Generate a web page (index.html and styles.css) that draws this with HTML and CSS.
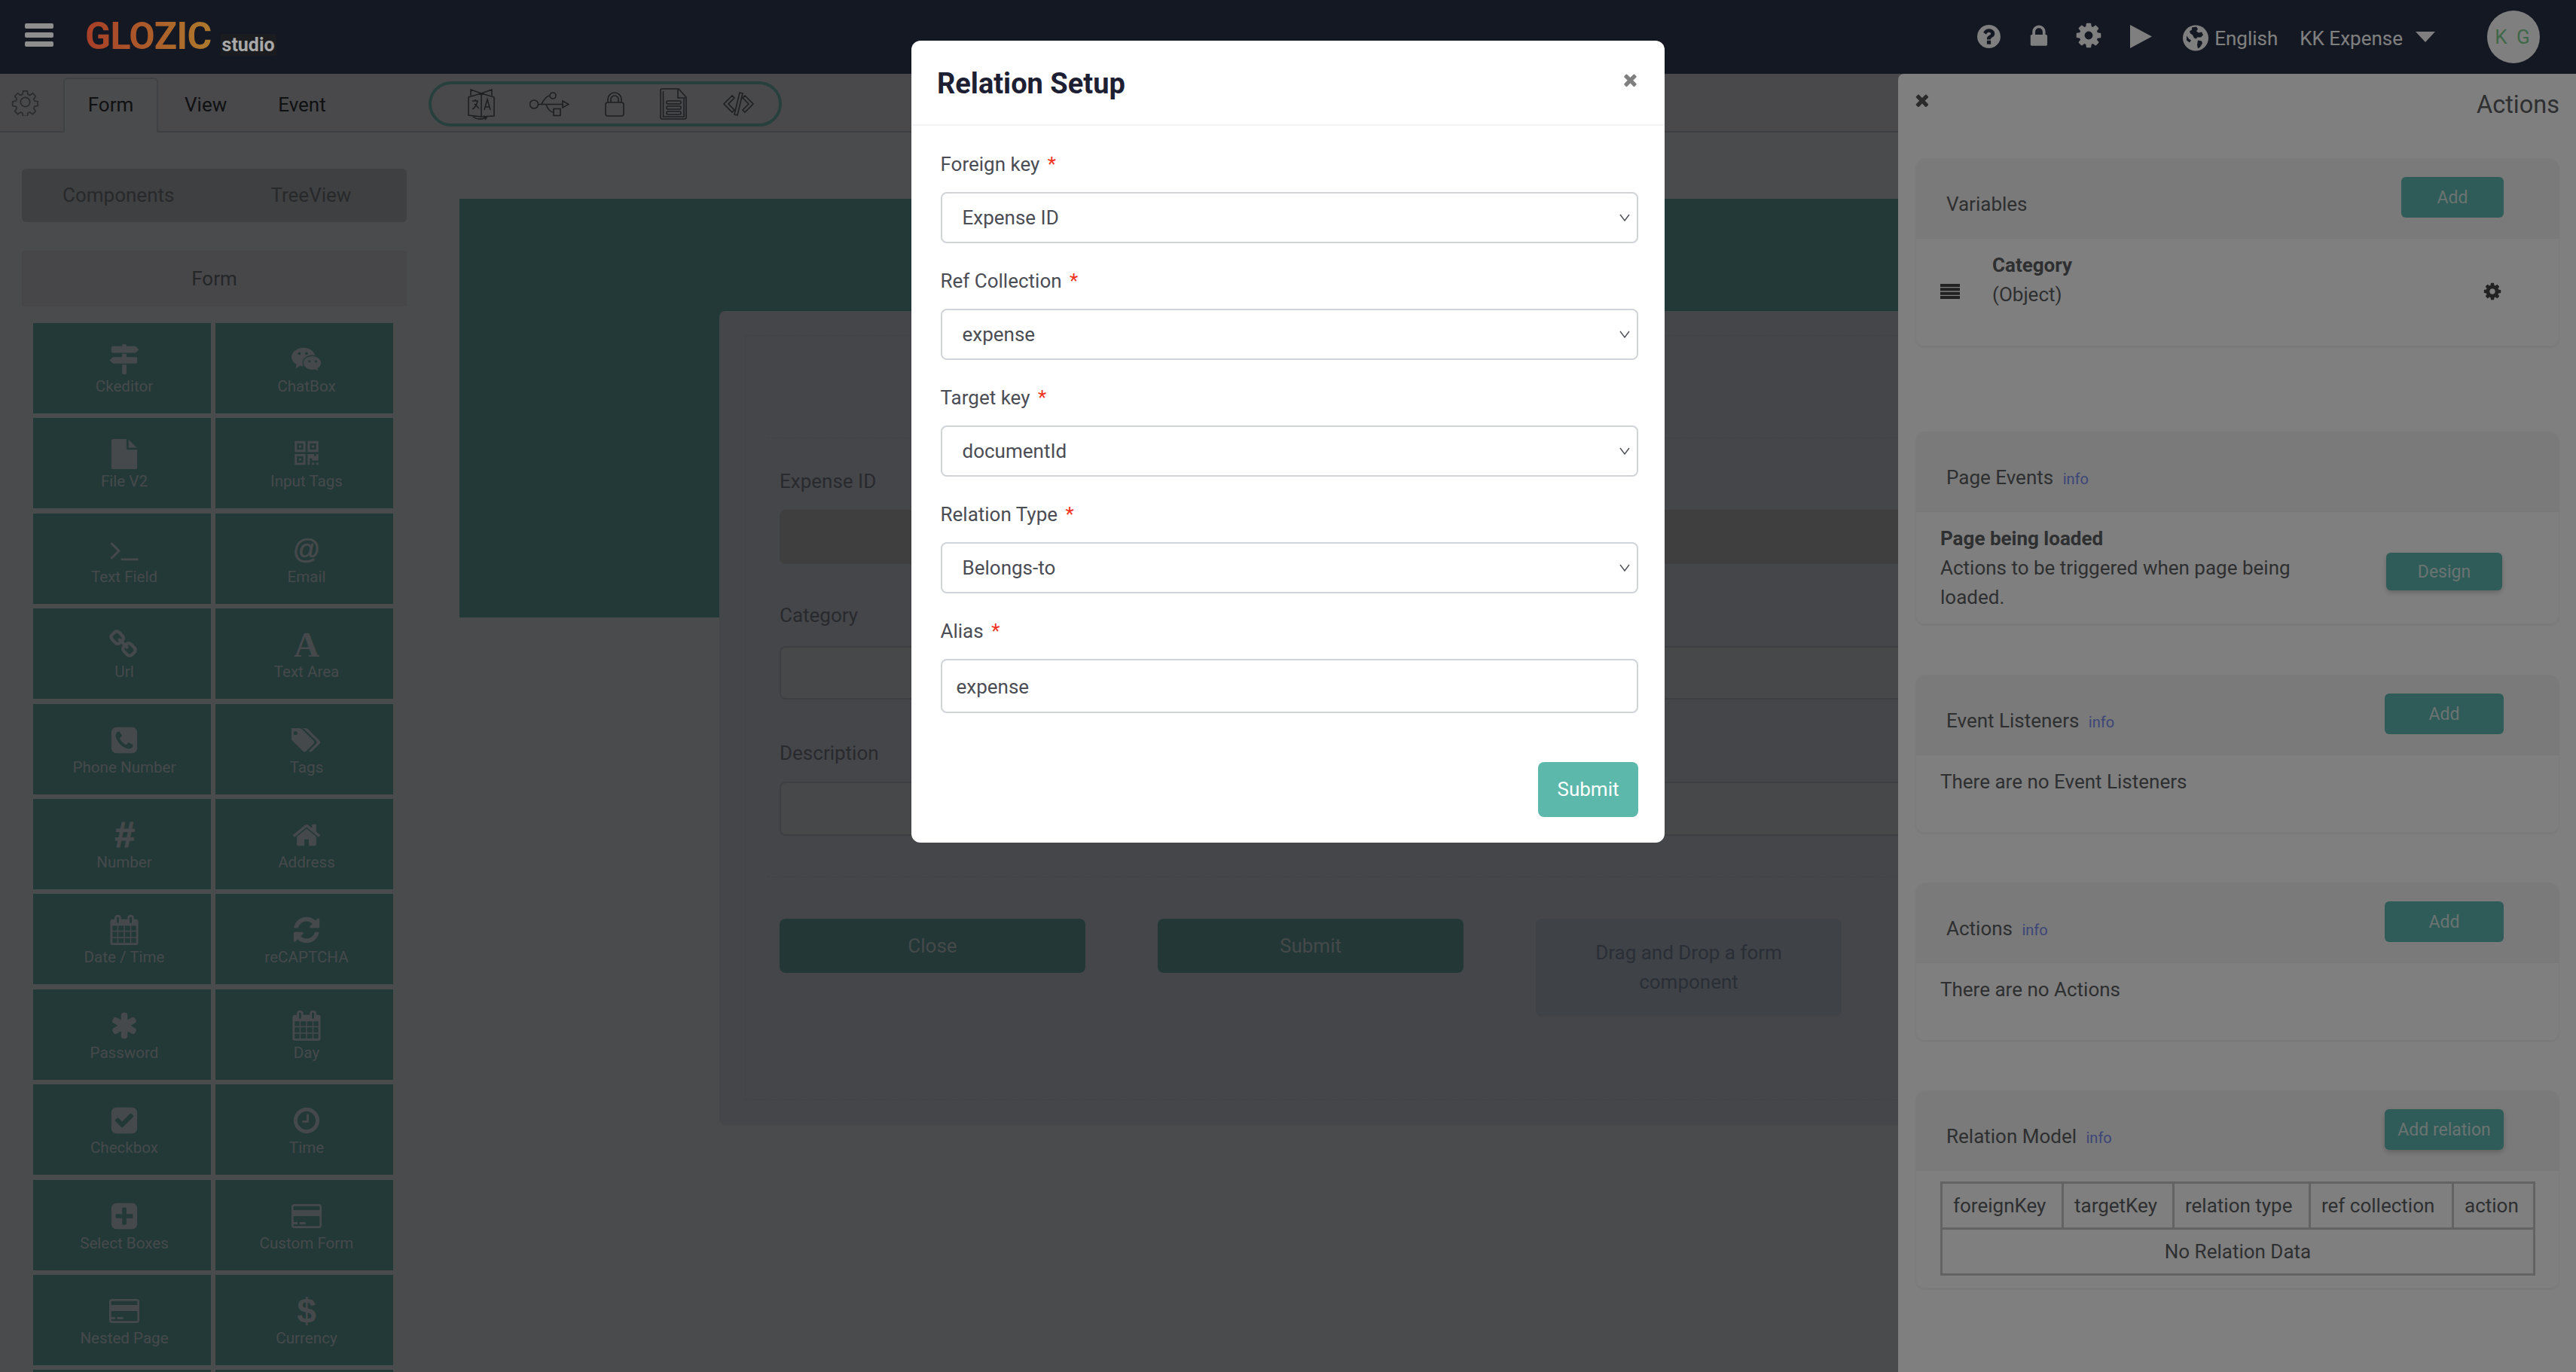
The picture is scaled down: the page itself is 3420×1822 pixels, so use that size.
FILE: index.html
```html
<!DOCTYPE html>
<html lang="en">
<head>
<meta charset="utf-8">
<title>Glozic Studio</title>
<link rel="stylesheet" href="styles.css">
</head>
<body>
<svg class="defs" aria-hidden="true">
  <symbol id="cog" viewBox="0 0 1792 1792"><path d="M1152 896q0-106-75-181t-181-75-181 75-75 181 75 181 181 75 181-75 75-181zm512-109v222q0 12-8 23t-20 13l-185 28q-19 54-39 91 35 50 107 138 10 12 10 25t-9 23q-27 37-99 108t-94 71q-12 0-26-9l-138-108q-44 23-91 38-16 136-29 186-7 28-36 28h-222q-14 0-24.500-8.500t-11.500-21.500l-28-184q-49-16-90-37l-141 107q-10 9-25 9-14 0-25-11-126-114-165-168-7-10-7-23 0-12 8-23 15-21 51-66.500t54-70.500q-27-50-41-99l-183-27q-13-2-21-12.500t-8-23.500v-222q0-12 8-23t19-13l186-28q14-46 39-92-40-57-107-138-10-12-10-24 0-10 9-23 26-36 98.500-107.500t94.500-71.500q13 0 26 10l138 107q44-23 91-38 16-136 29-186 7-28 36-28h222q14 0 24.500 8.500t11.500 21.500l28 184q49 16 90 37l142-107q9-9 24-9 13 0 25 10 129 119 165 170 7 8 7 22 0 12-8 23-15 21-51 66.500t-54 70.500q26 50 41 98l183 28q13 2 21 12.500t8 23.500z"/></symbol>
  <symbol id="lock" viewBox="300 100 1200 1500"><path d="M640 768h512v-192q0-106-75-181t-181-75-181 75-75 181v192zm832 96v576q0 40-28 68t-68 28h-960q-40 0-68-28t-28-68v-576q0-40 28-68t68-28h32v-192q0-184 132-316t316-132 316 132 132 316v192h32q40 0 68 28t28 68z"/></symbol>
  <symbol id="cal" viewBox="0 0 1792 1792"><path d="M192 1664h288v-288h-288v288zm352 0h320v-288h-320v288zm-352-352h288v-320h-288v320zm352 0h320v-320h-320v320zm-352-384h288v-288h-288v288zm736 736h320v-288h-320v288zm-384-736h320v-288h-320v288zm768 736h288v-288h-288v288zm-384-352h320v-320h-320v320zm-352-864v-288q0-13-9.500-22.500t-22.500-9.500h-64q-13 0-22.500 9.500t-9.500 22.500v288q0 13 9.500 22.500t22.500 9.500h64q13 0 22.500-9.500t9.500-22.500zm736 864h288v-320h-288v320zm-384-384h320v-288h-320v288zm384 0h288v-288h-288v288zm32-480v-288q0-13-9.500-22.500t-22.500-9.500h-64q-13 0-22.500 9.500t-9.500 22.500v288q0 13 9.500 22.500t22.500 9.500h64q13 0 22.500-9.500t9.500-22.500zm384-64v1280q0 52-38 90t-90 38h-1408q-52 0-90-38t-38-90v-1280q0-52 38-90t90-38h128v-96q0-66 47-113t113-47h64q66 0 113 47t47 113v96h384v-96q0-66 47-113t113-47h64q66 0 113 47t47 113v96h128q52 0 90 38t38 90z"/></symbol>
  <symbol id="card" viewBox="0 0 1920 1792"><path d="M1760 128q66 0 113 47t47 113v1216q0 66-47 113t-113 47h-1600q-66 0-113-47t-47-113v-1216q0-66 47-113t113-47h1600zm-1600 128q-13 0-22.500 9.500t-9.500 22.500v224h1664v-224q0-13-9.500-22.500t-22.500-9.500h-1600zm1600 1280q13 0 22.500-9.500t9.500-22.500v-608h-1664v608q0 13 9.500 22.500t22.500 9.500h1600zm-1632-128v-128h256v128h-256zm384 0v-128h384v128h-384z"/></symbol>
  <symbol id="times" viewBox="250 250 1300 1300"><path d="M1490 1322q0 40-28 68l-136 136q-28 28-68 28t-68-28l-294-294-294 294q-28 28-68 28t-68-28l-136-136q-28-28-28-68t28-68l294-294-294-294q-28-28-28-68t28-68l136-136q28-28 68-28t68 28l294 294 294-294q28-28 68-28t68 28l136 136q28 28 28 68t-28 68l-294 294 294 294q28 28 28 68z"/></symbol>
</svg>

<div class="app">
  <header class="topbar">
    <svg class="burger" viewBox="0 0 38 31"><rect width="38" height="7" y="0" rx="2"/><rect width="38" height="7" y="12" rx="2"/><rect width="38" height="7" y="24" rx="2"/></svg>
    <div class="logo"><span class="logo-main">GLOZIC</span><span class="logo-sub">studio</span></div>
    <div class="top-actions">
      <svg class="top-ic q" viewBox="128 128 1536 1536"><path d="M1024 1376v-192q0-14-9-23t-23-9h-192q-14 0-23 9t-9 23v192q0 14 9 23t23 9h192q14 0 23-9t9-23zm256-672q0-88-55.500-163t-138.500-116-170-41q-243 0-371 213-15 24 8 42l132 100q7 6 19 6 16 0 25-12 53-68 86-92 34-24 86-24 48 0 85.500 26t37.500 59q0 38-20 61t-68 45q-63 28-115.500 86.500t-52.500 125.500v36q0 14 9 23t23 9h192q14 0 23-9t9-23q0-19 21.500-49.500t54.500-49.500q32-18 49-28.500t46-35 44.500-48 28-60.500 12.500-81zm384 192q0 209-103 385.500t-279.500 279.500-385.500 103-385.500-103-279.500-279.500-103-385.500 103-385.500 279.500-279.500 385.500-103 385.500 103 279.500 279.500 103 385.500z"/></svg>
      <svg class="top-ic l"><use href="#lock"/></svg>
      <svg class="top-ic g"><use href="#cog"/></svg>
      <svg class="top-ic p" viewBox="0 0 29 31"><path d="M0 0l29 15.500L0 31z"/></svg>
      <svg class="top-ic w" viewBox="0 0 34 34"><circle cx="17" cy="17" r="17"/><path class="land" d="M12 3l6-1 2 3-2 3 3 2 4-1 2 4-3 3-5 0-1 2-3-1-2-4-3-2-1-3 3-2zM20 20l5 1 1 3-3 5-3 2-1-5zM5 14l3 4 3 2-2 3-4-3z"/></svg>
      <span class="lang">English</span>
      <span class="app-name">KK Expense</span>
      <svg class="caret" viewBox="0 0 26 14"><path d="M0 0h26L13 14z"/></svg>
      <div class="avatar">K G</div>
    </div>
  </header>

  <nav class="toolbar">
    <svg class="gear-line" viewBox="0 0 24 24"><path d="M10 1.500h4l.6 3.200 1.900.8 2.700-1.900 2.800 2.800-1.900 2.700.8 1.900 3.100.6v4l-3.100.6-.8 1.900 1.900 2.700-2.800 2.800-2.700-1.900-1.900.8-.6 3.100h-4l-.6-3.100-1.900-.8-2.700 1.900-2.800-2.800 1.900-2.700-.8-1.900-3.200-.6v-4l3.200-.6.8-1.900-1.900-2.700 2.800-2.800 2.700 1.900 1.900-.8z" transform="translate(1.200 1.200) scale(.9)"/><circle cx="12" cy="12" r="4"/></svg>
    <a class="tab tab-active">Form</a>
    <a class="tab">View</a>
    <a class="tab tab-event">Event</a>
    <div class="tool-pill">
      <svg class="tool t1" viewBox="0 0 36 41"><path d="M1 11L18 6V37L1 35zM18 6L35 11V36L18 37M4 9V1L18 6L32 1V9M6 16h8M10 14v2M6 27c4-2 6-6 7-11M9 20l6 6M22 28l4-14 4 14M23.500 24h5M7 37c5 4 12 4 17 1M21 36l4 2-2 3"/></svg>
      <svg class="tool t2" viewBox="0 0 53 33"><circle cx="6" cy="16.500" r="5.500"/><circle cx="31" cy="5" r="4"/><path d="M12 16.500H44M44 12l8 4.500-8 4.500zM16 16Q22 5 27 5M22 17Q26 27 32 27M32 22.500h9v9h-9z"/></svg>
      <svg class="tool t3" viewBox="0 0 26 33"><rect x="1" y="14" width="24" height="18" rx="3"/><path d="M4 14V10a9 9 0 0118 0v4M8 14V10a5 5 0 0110 0v4"/></svg>
      <svg class="tool t4" viewBox="0 0 36 42"><path d="M1 3a2 2 0 012-2H25L35 12V39a2 2 0 01-2 2H3a2 2 0 01-2-2zM4.500 4V38H32V14M24 2V13H34"/><rect x="9" y="17" width="19" height="4" rx="1.500"/><rect x="9" y="24" width="19" height="4" rx="1.500"/><rect x="9" y="31" width="19" height="4" rx="1.500"/></svg>
      <svg class="tool t5" viewBox="0 0 43 32"><path d="M13 5L2 16L13 27L16 24L8 16L16 8zM30 5L41 16L30 27L27 24L35 16L27 8zM23 1L27 2L20 31L16 30z"/></svg>
    </div>
  </nav>

  <div class="workspace">
    <aside class="palette">
      <div class="switch"><span>Components</span><span>TreeView</span></div>
      <div class="section-title">Form</div>
      <div class="cells">
        <div class="cell"><svg class="ic" viewBox="0 0 1792 1792"><path d="M1745 297q10 10 10 23t-10 23l-141 141q-28 28-68 28h-1344q-26 0-45-19t-19-45v-256q0-26 19-45t45-19h576v-64q0-26 19-45t45-19h128q26 0 45 19t19 45v64h512q40 0 68 28zm-977 919h256v512q0 26-19 45t-45 19h-128q-26 0-45-19t-19-45v-512zm832-448q26 0 45 19t19 45v256q0 26-19 45t-45 19h-1344q-40 0-68-28l-141-141q-10-10-10-23t10-23l141-141q28-28 68-28h512v-192h256v192h576z"/></svg><span>Ckeditor</span></div>
        <div class="cell"><svg class="ic" viewBox="0 0 42 36"><path d="M17 2c9 0 16 6 16 13s-7 13-16 13q-3 0-5-1l-6 4 1-6c-4-2-7-6-7-10C0 8 8 2 17 2z"/><path class="cut" d="M29 13c7 0 13 5 13 10 0 3-2 6-5 8l1 5-5-3q-2 .5-4 .5c-7 0-13-5-13-10.500S22 13 29 13z"/><circle class="cut-fill" cx="11" cy="10" r="2"/><circle class="cut-fill" cx="21" cy="10" r="2"/><circle class="cut-fill" cx="25" cy="21" r="1.600"/><circle class="cut-fill" cx="34" cy="21" r="1.600"/></svg><span>ChatBox</span></div>
        <div class="cell"><svg class="ic" viewBox="0 0 1792 1792"><path d="M1152 512v-472q22 14 36 28l408 408q14 14 28 36h-472zm-128 32q0 40 28 68t68 28h544v1056q0 40-28 68t-68 28h-1344q-40 0-68-28t-28-68v-1600q0-40 28-68t68-28h800v544z"/></svg><span>File V2</span></div>
        <div class="cell"><svg class="ic" viewBox="0 0 1792 1792"><path d="M576 1152v128h-128v-128h128zm0-768v128h-128v-128h128zm768 0v128h-128v-128h128zm-1024 1023h384v-383h-384v383zm0-767h384v-384h-384v384zm768 0h384v-384h-384v384zm-256 256v640h-640v-640h640zm512 512v128h-128v-128h128zm256 0v128h-128v-128h128zm0-512v384h-384v-128h-128v384h-128v-640h384v128h128v-128h128zm-768-768v640h-640v-640h640zm768 0v640h-640v-640h640z"/></svg><span>Input Tags</span></div>
        <div class="cell"><svg class="ic" viewBox="0 0 1792 1792"><path d="M649 983l-466 466q-10 10-23 10t-23-10l-50-50q-10-10-10-23t10-23l393-393-393-393q-10-10-10-23t10-23l50-50q10-10 23-10t23 10l466 466q10 10 10 23t-10 23zm1079 457v64q0 14-9 23t-23 9h-960q-14 0-23-9t-9-23v-64q0-14 9-23t23-9h960q14 0 23 9t9 23z"/></svg><span>Text Field</span></div>
        <div class="cell"><b class="ic glyph at">@</b><span>Email</span></div>
        <div class="cell"><svg class="ic" viewBox="0 0 1792 1792"><path d="M1456 1216q0-40-28-68l-208-208q-28-28-68-28-42 0-72 32 3 3 19 18.500t21.500 21.500 15 19 13 25.500 3.500 27.500q0 40-28 68t-68 28q-15 0-27.500-3.500t-25.500-13-19-15-21.500-21.500-18.500-19q-33 31-33 73 0 40 28 68l206 207q27 27 68 27 40 0 68-26l147-146q28-28 28-67zm-703-705q0-40-28-68l-206-207q-28-28-68-28-39 0-68 27l-147 146q-28 28-28 67 0 40 28 68l208 208q27 27 68 27 42 0 72-31-3-3-19-18.500t-21.500-21.500-15-19-13-25.500-3.500-27.500q0-40 28-68t68-28q15 0 27.500 3.500t25.500 13 19 15 21.500 21.500 18.500 19q33-31 33-73zm895 705q0 120-85 203l-147 146q-83 83-203 83-121 0-204-85l-206-207q-83-83-83-203 0-123 88-209l-88-88q-86 88-208 88-120 0-204-84l-208-208q-84-84-84-204t85-203l147-146q83-83 203-83 121 0 204 85l206 207q83 83 83 203 0 123-88 209l88 88q86-88 208-88 120 0 204 84l208 208q84 84 84 204z"/></svg><span>Url</span></div>
        <div class="cell"><b class="ic glyph serif">A</b><span>Text Area</span></div>
        <div class="cell"><svg class="ic" viewBox="0 0 1792 1792"><path d="M1408 1193q0-11-2-16t-18-16.500-40.500-25-47.500-26.500-45.500-25-28.500-15q-5-3-19-13t-25-15-21-5q-15 0-36.500 20.500t-39.500 45-38.500 45-33.500 20.500q-7 0-16.500-3.500t-15.500-6.500-17-9.500-14-8.500q-99-55-170-126.500t-127-170.500q-2-3-8.500-14t-9.500-17-6.500-15.500-3.500-16.500q0-13 20.500-33.500t45-38.500 45-39.500 20.500-36.500q0-10-5-21t-15-25-13-19q-3-6-15-28.500t-25-45.500-26.500-47.500-25-40.500-16.500-18-16-2q-48 0-101 22-46 21-80 94.500t-34 130.500q0 16 2.500 34t5 30.500 9 33 10 29.500 12.500 33 11 30q60 164 216.500 320.500t320.500 216.500q6 2 30 11t33 12.500 29.500 10 33 9 30.500 5 34 2.500q57 0 130.500-34t94.500-80q22-53 22-101zm256-777v960q0 119-84.500 203.500t-203.500 84.500h-960q-119 0-203.500-84.500t-84.500-203.500v-960q0-119 84.500-203.500t203.500-84.500h960q119 0 203.500 84.500t84.500 203.500z"/></svg><span>Phone Number</span></div>
        <div class="cell"><svg class="ic" viewBox="0 0 1920 1792"><path d="M384 448q0-53-37.500-90.500t-90.500-37.500-90.500 37.500-37.500 90.500 37.500 90.500 90.500 37.500 90.500-37.500 37.500-90.500zm1067 576q0 53-37 90l-491 492q-39 37-91 37-53 0-90-37l-715-716q-38-37-64.500-101t-26.500-117v-416q0-52 38-90t90-38h416q53 0 117 26.500t102 64.500l715 714q37 39 37 91zm384 0q0 53-37 90l-491 492q-39 37-91 37-36 0-59-14t-53-45l470-470q37-37 37-90 0-52-37-91l-715-714q-38-38-102-64.500t-117-26.500h224q53 0 117 26.500t102 64.500l715 714q37 39 37 91z"/></svg><span>Tags</span></div>
        <div class="cell"><b class="ic glyph hash">#</b><span>Number</span></div>
        <div class="cell"><svg class="ic" viewBox="0 0 1792 1792"><path d="M1472 992v480q0 26-19 45t-45 19h-384v-384h-256v384h-384q-26 0-45-19t-19-45v-480q0-1 .5-3t.5-3l575-474 575 474q1 2 1 6zm223-69l-62 74q-8 9-21 11h-3q-13 0-21-7l-692-577-692 577q-12 8-24 7-13-2-21-11l-62-74q-8-10-7-23.500t11-21.500l719-599q32-26 76-26t76 26l244 204v-195q0-14 9-23t23-9h192q14 0 23 9t9 23v408l219 182q10 8 11 21.500t-7 23.500z"/></svg><span>Address</span></div>
        <div class="cell"><svg class="ic"><use href="#cal"/></svg><span>Date / Time</span></div>
        <div class="cell"><svg class="ic" viewBox="0 0 1792 1792"><path d="M1639 1056q0 5-1 7-64 268-268 434.500t-478 166.500q-146 0-282.500-55t-243.500-157l-129 129q-19 19-45 19t-45-19-19-45v-448q0-26 19-45t45-19h448q26 0 45 19t19 45-19 45l-137 137q71 66 161 102t187 36q134 0 250-65t186-179q11-17 53-117 8-23 30-23h192q13 0 22.500 9.500t9.500 22.500zm25-800v448q0 26-19 45t-45 19h-448q-26 0-45-19t-19-45 19-45l138-138q-148-137-349-137-134 0-250 65t-186 179q-11 17-53 117-8 23-30 23h-199q-13 0-22.500-9.500t-9.500-22.500v-7q65-268 270-434.500t480-166.500q146 0 284 55.500t245 156.500l130-129q19-19 45-19t45 19 19 45z"/></svg><span>reCAPTCHA</span></div>
        <div class="cell"><svg class="ic" viewBox="0 0 1792 1792"><path d="M1546 1050q46 26 59.500 77.500t-12.500 97.500l-64 110q-26 46-77.500 59.500t-97.500-12.500l-266-153v307q0 52-38 90t-90 38h-128q-52 0-90-38t-38-90v-307l-266 153q-46 26-97.500 12.500t-77.500-59.500l-64-110q-26-46-12.500-97.500t59.500-77.500l266-154-266-154q-46-26-59.500-77.500t12.500-97.500l64-110q26-46 77.500-59.500t97.500 12.500l266 153v-307q0-52 38-90t90-38h128q52 0 90 38t38 90v307l266-153q46-26 97.500-12.500t77.500 59.500l64 110q26 46 12.500 97.500t-59.500 77.500l-266 154z"/></svg><span>Password</span></div>
        <div class="cell"><svg class="ic"><use href="#cal"/></svg><span>Day</span></div>
        <div class="cell"><svg class="ic" viewBox="0 0 1792 1792"><path d="M813 1299l614-614q19-19 19-45t-19-45l-102-102q-19-19-45-19t-45 19l-467 467-211-211q-19-19-45-19t-45 19l-102 102q-19 19-19 45t19 45l358 358q19 19 45 19t45-19zm851-883v960q0 119-84.500 203.500t-203.500 84.500h-960q-119 0-203.500-84.500t-84.500-203.500v-960q0-119 84.500-203.500t203.500-84.500h960q119 0 203.500 84.500t84.500 203.500z"/></svg><span>Checkbox</span></div>
        <div class="cell"><svg class="ic" viewBox="0 0 1792 1792"><path d="M1024 544v448q0 14-9 23t-23 9h-320q-14 0-23-9t-9-23v-64q0-14 9-23t23-9h224v-352q0-14 9-23t23-9h64q14 0 23 9t9 23zm416 352q0-148-73-273t-198-198-273-73-273 73-198 198-73 273 73 273 198 198 273 73 273-73 198-198 73-273zm224 0q0 209-103 385.500t-279.500 279.500-385.500 103-385.500-103-279.500-279.500-103-385.500 103-385.500 279.500-279.500 385.500-103 385.500 103 279.500 279.500 103 385.500z"/></svg><span>Time</span></div>
        <div class="cell"><svg class="ic" viewBox="0 0 1792 1792"><path d="M1408 960v-128q0-26-19-45t-45-19h-320v-320q0-26-19-45t-45-19h-128q-26 0-45 19t-19 45v320h-320q-26 0-45 19t-19 45v128q0 26 19 45t45 19h320v320q0 26 19 45t45 19h128q26 0 45-19t19-45v-320h320q26 0 45-19t19-45zm256-544v960q0 119-84.500 203.500t-203.500 84.500h-960q-119 0-203.500-84.500t-84.500-203.500v-960q0-119 84.500-203.500t203.500-84.500h960q119 0 203.500 84.500t84.500 203.500z"/></svg><span>Select Boxes</span></div>
        <div class="cell"><svg class="ic"><use href="#card"/></svg><span>Custom Form</span></div>
        <div class="cell"><svg class="ic"><use href="#card"/></svg><span>Nested Page</span></div>
        <div class="cell"><b class="ic glyph dollar">$</b><span>Currency</span></div>
        <div class="cell"></div>
        <div class="cell"></div>
      </div>
    </aside>

    <main class="canvas">
      <div class="banner"></div>
      <section class="form-card">
        <div class="form-outer">
          <div class="form-inner">
            <div class="fld"><label class="fld-label">Expense ID</label><div class="fld-box fld-disabled"></div></div>
            <div class="fld"><label class="fld-label">Category</label><div class="fld-box"></div></div>
            <div class="fld"><label class="fld-label">Description</label><div class="fld-box"></div></div>
          </div>
          <div class="form-actions">
            <div class="form-btn">Close</div>
            <div class="form-btn">Submit</div>
            <div class="drop-box">Drag and Drop a form component</div>
          </div>
        </div>
      </section>
    </main>
  </div>
</div>

<aside class="actions-panel">
  <div class="panel-head">
    <svg class="panel-close"><use href="#times"/></svg>
    <h2 class="panel-title">Actions</h2>
  </div>

  <section class="pcard pcard-vars">
    <div class="pcard-head"><span class="pcard-title">Variables</span><button class="pbtn pbtn-narrow">Add</button></div>
    <div class="pcard-body var-row">
      <svg class="drag" viewBox="0 0 26 20"><path d="M0 0h26v4H0zM0 5.300h26v4H0zM0 10.700h26v4H0zM0 16h26v4H0z"/></svg>
      <div class="var-text"><strong>Category</strong><span>(Object)</span></div>
      <svg class="var-gear"><use href="#cog"/></svg>
    </div>
  </section>

  <section class="pcard pcard-events">
    <div class="pcard-head"><span class="pcard-title">Page Events <a class="info">info</a></span></div>
    <div class="pcard-body event-row">
      <p class="event-text"><strong>Page being loaded</strong><br>Actions to be triggered when page being loaded.</p>
      <button class="pbtn pbtn-design">Design</button>
    </div>
  </section>

  <section class="pcard pcard-sm">
    <div class="pcard-head"><span class="pcard-title">Event Listeners <a class="info">info</a></span><button class="pbtn">Add</button></div>
    <div class="pcard-body empty">There are no Event Listeners</div>
  </section>

  <section class="pcard pcard-sm">
    <div class="pcard-head"><span class="pcard-title">Actions <a class="info">info</a></span><button class="pbtn">Add</button></div>
    <div class="pcard-body empty">There are no Actions</div>
  </section>

  <section class="pcard pcard-rel">
    <div class="pcard-head"><span class="pcard-title">Relation Model <a class="info">info</a></span><button class="pbtn pbtn-shadow">Add relation</button></div>
    <div class="pcard-body table-wrap">
      <table class="rel-table">
        <thead><tr><th class="c1">foreignKey</th><th class="c2">targetKey</th><th class="c3">relation type</th><th class="c4">ref collection</th><th class="c5">action</th></tr></thead>
        <tbody><tr><td colspan="5">No Relation Data</td></tr></tbody>
      </table>
    </div>
  </section>
</aside>

<div class="backdrop"></div>

<div class="modal">
  <div class="modal-head">
    <h1 class="modal-title">Relation Setup</h1>
    <svg class="modal-close"><use href="#times"/></svg>
  </div>
  <form class="modal-body">
    <div class="m-group"><label class="m-label">Foreign key <i>*</i></label><div class="sel"><select class="m-select"><option>Expense ID</option></select><svg class="chev" viewBox="0 0 14 10"><path d="M1 1l6 8 6-8"/></svg></div></div>
    <div class="m-group"><label class="m-label">Ref Collection <i>*</i></label><div class="sel"><select class="m-select"><option>expense</option></select><svg class="chev" viewBox="0 0 14 10"><path d="M1 1l6 8 6-8"/></svg></div></div>
    <div class="m-group"><label class="m-label">Target key <i>*</i></label><div class="sel"><select class="m-select"><option>documentId</option></select><svg class="chev" viewBox="0 0 14 10"><path d="M1 1l6 8 6-8"/></svg></div></div>
    <div class="m-group"><label class="m-label">Relation Type <i>*</i></label><div class="sel"><select class="m-select"><option>Belongs-to</option></select><svg class="chev" viewBox="0 0 14 10"><path d="M1 1l6 8 6-8"/></svg></div></div>
    <div class="m-group"><label class="m-label">Alias <i>*</i></label><input class="m-input" value="expense"></div>
    <div class="m-foot"><button type="button" class="m-submit">Submit</button></div>
  </form>
</div>
</body>
</html>
```
FILE: styles.css
```css
* { box-sizing: border-box; }
html, body { margin: 0; height: 100%; }
body {
  width: 3420px; height: 1822px; overflow: hidden; position: relative;
  font-family: Roboto, "Liberation Sans", sans-serif; font-size: 26px; color: #5a5c62; background: #95969a;
}
.defs { position: absolute; width: 0; height: 0; }
svg { display: block; fill: currentColor; flex: none; }

.app { display: flex; flex-direction: column; height: 1822px; overflow: hidden; }

/* top bar */
.topbar { height: 98px; flex: none; display: flex; align-items: center; background: #283046; color: #fff; padding-left: 33px; padding-right: 48px; }
.burger { position: relative; z-index: 12; width: 38px; height: 31px; color: #8e8e8e; margin-top: -5px; }
.logo { position: relative; z-index: 12; display: flex; align-items: flex-end; margin-left: 42px; margin-top: -3px; }
.logo-main { font-size: 50px; line-height: 40px; font-weight: 700; font-family: Roboto, sans-serif; letter-spacing: -.6px; background: linear-gradient(90deg, #a83e28, #ad7a2c); -webkit-background-clip: text; background-clip: text; color: transparent; }
.logo-sub { font-size: 25px; line-height: 29px; height: 29px; font-weight: 700; color: #a8a8a8; background: #1a1c20; margin-left: 12px; padding: 0 2px; margin-bottom: -6px; }
.top-actions { margin-left: auto; display: flex; align-items: center; }
.top-ic { color: #fff; }
.top-ic.q { width: 31px; height: 31px; margin-top: -2px; }
.top-ic.l { width: 24px; height: 29px; margin-left: 39px; margin-top: -4px; }
.top-ic.g { width: 38px; height: 38px; margin-left: 35px; margin-top: -4px; }
.top-ic.p { width: 29px; height: 31px; margin-left: 36px; margin-top: -2px; }
.top-ic.w { width: 34px; height: 35px; margin-left: 41px; margin-top: 2px; }
.land { fill: #283046; }
.lang { margin-left: 8px; color: #fff; font-size: 26px; margin-top: 3px; }
.app-name { margin-left: 29px; color: #fff; font-size: 26px; margin-top: 3px; }
.caret { width: 26px; height: 14px; color: #fff; margin-left: 17px; }
.avatar { width: 70px; height: 70px; border-radius: 50%; background: #fff; color: #7fd090; margin-left: 69px; display: flex; align-items: center; justify-content: center; font-size: 26px; letter-spacing: 3px; }

/* toolbar */
.toolbar { height: 78px; flex: none; display: flex; align-items: flex-end; border-bottom: 2px solid #7d7f84; background: #929397; color: #222428; }
.gear-line { width: 37px; height: 37px; fill: none; stroke: #55575c; stroke-width: 1.200; margin-left: 15px; margin-bottom: 20px; }
.tab { height: 73px; margin-bottom: -2px; padding: 14px 33px 0; font-size: 26px; line-height: 40px; color: #212226; border: 2px solid transparent; border-bottom: 0; }
.tab-active { margin-left: 32px; width: 126px; padding: 14px 0 0; text-align: center; background: #95969a; border-color: #818388; border-radius: 6px 6px 0 0; }
.tab-event { margin-left: -2px; }
.tool-pill { display: flex; align-items: center; width: 469px; height: 60px; margin-left: 101px; margin-bottom: 6px; border: 4px solid #4f817c; border-radius: 30px; }
.tool { fill: none; stroke: #3c3e44; stroke-width: 1.600; }
.t1 { width: 36px; height: 41px; margin-left: 48px; }
.t2 { width: 53px; height: 33px; margin-left: 46px; }
.t3 { width: 26px; height: 33px; margin-left: 47px; }
.t4 { width: 36px; height: 42px; margin-left: 47px; }
.t5 { width: 43px; height: 32px; margin-left: 47px; }

/* workspace */
.workspace { flex: 1; display: flex; min-height: 0; overflow: hidden; }
.palette { width: 610px; flex: none; padding: 48px 70px 0 29px; }
.switch { height: 71px; width: 511px; display: flex; align-items: center; background: #7e8084; border-radius: 6px; color: #505256; padding-bottom: 2px; }
.switch span { font-size: 26px; }
.switch span:first-child { margin-left: 54px; }
.switch span:last-child { margin-left: 128px; }
.section-title { height: 74px; width: 511px; margin-top: 38px; background: #8e8f93; color: #4a4c50; font-size: 26px; display: flex; align-items: center; justify-content: center; }
.cells { margin-top: 22px; margin-left: 15px; display: grid; grid-template-columns: 236px 236px; column-gap: 6px; grid-auto-rows: 120px; row-gap: 6.400px; }
.cell { background: #46726f; color: #8c9296; display: flex; flex-direction: column; align-items: center; padding: 28px 0 0 6px; font-size: 20.600px; }
.cell span { margin-top: 4px; line-height: 24px; }
.ic { width: 40px; height: 40px; display: block; }
.glyph { display: flex; align-items: center; justify-content: center; font-family: "Liberation Sans", sans-serif; font-weight: 700; font-style: normal; }
.glyph.at { font-size: 36px; font-weight: 400; -webkit-text-stroke: .6px #8c9296; }
.glyph.serif { font-family: "Liberation Serif", serif; font-size: 47px; }
.glyph.hash { font-size: 48px; font-style: italic; -webkit-text-stroke: 1px #8c9296; }
.glyph.dollar { font-size: 46px; }
.cut { stroke: #46726f; stroke-width: 1.500; }
.cut-fill { fill: #46726f; }

/* canvas */
.canvas { flex: 1; min-width: 0; padding-top: 88px; }
.banner { height: 556px; background: #46726f; }
.form-card { margin-top: -407px; margin-left: 345px; width: 1800px; height: 1081px; background: #8a8c94; border-radius: 8px; padding: 32px 0 0 34px; position: relative; }
.form-outer { border: 1px dashed #82848c; height: 1016px; padding-top: 135px; }
.form-inner { border-top: 1px dashed #82848c; border-bottom: 1px dashed #82848c; margin-left: 29px; padding: 38px 0 2px 16px; }
.fld { margin-bottom: 52px; }
.fld:nth-child(2) .fld-label { margin-top: -3px; margin-bottom: 22px; }
.fld-label { display: block; height: 38px; line-height: 38px; margin-bottom: 19px; font-size: 26px; color: #52545c; }
.fld-box { height: 71.500px; border: 2px solid #7c7e86; border-radius: 8px; background: #8e9092; }
.fld-disabled { background: #7e7e7e; border-color: #7e7e7e; }
.form-actions { display: flex; align-items: flex-start; gap: 96px; margin-left: 45px; margin-top: 55px; }
.form-btn { width: 406px; height: 72px; border-radius: 8px; background: #446e6c; color: #8c9294; font-size: 26px; display: flex; align-items: center; justify-content: center; }
.drop-box { width: 406px; height: 130px; padding: 26px 40px 0; border-radius: 8px; background: #7e848c; color: #545e6e; font-size: 26px; line-height: 39px; text-align: center; }

/* right panel */
.actions-panel { position: absolute; left: 2520px; top: 98px; width: 900px; height: 1724px; background: #fff; border-radius: 8px 0 0 0; padding: 0 22px 0 23px; color: #5c5e62; }
.panel-head { height: 112px; display: flex; justify-content: space-between; padding-top: 13px; }
.panel-close { width: 18px; height: 18px; margin-top: 13px; color: #555; }
.panel-title { margin: 0; font-size: 32.500px; line-height: 56px; font-weight: 400; color: #5c5e62; }
.pcard { border-radius: 12px; box-shadow: 0 2px 2px rgba(0,0,0,.05); margin-bottom: 66px; border: 1px solid #f7f7f7; }
.pcard-vars { height: 250px; margin-bottom: 113px; }
.pcard-events { height: 256px; margin-bottom: 67px; }
.pcard-sm { height: 210px; }
.pcard-rel { height: 263px; margin-top: 1px; }
.pcard-head { height: 106px; background: #f4f4f4; border-radius: 12px 12px 0 0; display: flex; justify-content: space-between; align-items: flex-start; padding-left: 40px; padding-right: 73px; border-bottom: 1px solid #f0f0f0; }
.pcard-title { font-size: 26px; line-height: 38px; margin-top: 41px; color: #5c5e62; }
.info { font-size: 20px; color: #7a8cf0; margin-left: 6px; }
.pbtn { width: 158px; height: 54px; margin-top: 24px; background: #5eb8b0; border: 0; border-radius: 6px; color: #d6e6e4; font: 400 23px Roboto, sans-serif; padding: 0; }
.pbtn-narrow { width: 136px; }
.pbtn-shadow { box-shadow: 0 3px 6px rgba(0,0,0,.2); }
.pbtn-design { width: 154px; height: 50px; margin-top: 0; box-shadow: 0 3px 6px rgba(0,0,0,.2); }
.var-row { display: flex; align-items: flex-start; padding: 0 75px 0 32px; }
.drag { width: 26px; height: 20px; margin-top: 60px; color: #444; }
.var-text { margin-left: 43px; margin-top: 16px; display: flex; flex-direction: column; line-height: 39px; }
.var-text strong { font-weight: 700; }
.var-gear { width: 26px; height: 26px; margin-left: auto; margin-top: 57px; color: #444; }
.event-row { display: flex; justify-content: space-between; padding: 16px 75px 0 32px; align-items: flex-start; }
.event-text { margin: 0; width: 500px; line-height: 39px; }
.event-row .pbtn { margin-top: 38px; }
.empty { padding: 16px 32px; line-height: 38px; }
.table-wrap { padding: 14px 32px 0; }
.rel-table { width: 787px; border-collapse: collapse; font-size: 26px; table-layout: fixed; }
.rel-table th, .rel-table td { border: 3px solid #c6c6c6; height: 61px; font-weight: 400; padding: 0; text-align: center; }
.rel-table th { text-align: left; padding-left: 14px; }
.c1 { width: 161px; } .c2 { width: 147px; } .c3 { width: 181px; } .c4 { width: 190px; } .c5 { width: 108px; }

/* modal layer */
.backdrop { position: absolute; inset: 0; background: rgba(0,0,0,.5); z-index: 10; }
.modal { position: absolute; z-index: 20; left: 1210px; top: 54px; width: 1000px; height: 1065px; background: #fff; border-radius: 12px; color: #4b4d55; }
.modal-head { height: 113px; border-bottom: 2px solid #f2f3f4; display: flex; justify-content: space-between; align-items: center; padding: 3px 36px 0 34px; }
.modal-title { margin: 0; font-size: 38px; font-weight: 700; color: #1d2033; }
.modal-close { width: 19px; height: 18px; color: #7f7f7f; margin-top: -10px; }
.modal-body { padding: 33px 35px 0 38.500px; }
.m-group { margin-bottom: 32px; }
.m-label { display: block; height: 40px; line-height: 37px; margin-bottom: 15px; font-size: 26px; color: #4b4d55; }
.m-label i { color: #f0321e; font-style: normal; margin-left: 4px; }
.sel { position: relative; }
.m-select, .m-input { display: block; width: 926px; height: 68px; border: 2px solid #d0d4d9; border-radius: 8px; background: #fff; font: 400 26px Roboto, sans-serif; color: #4b4d55; appearance: none; -webkit-appearance: none; padding: 0 0 0 27px; outline: 0; }
.m-input { height: 72px; padding: 2px 0 0 19px; }
.chev { position: absolute; right: 11px; top: 29px; width: 14px; height: 10px; fill: none; stroke: #4b4d55; stroke-width: 1.400; }
.m-foot { display: flex; justify-content: flex-end; margin-top: 65px; }
.m-submit { width: 133px; height: 73px; background: #5cb8aa; border: 0; border-radius: 8px; color: #fff; font: 400 26px Roboto, sans-serif; padding: 0 0 2px; }
```
